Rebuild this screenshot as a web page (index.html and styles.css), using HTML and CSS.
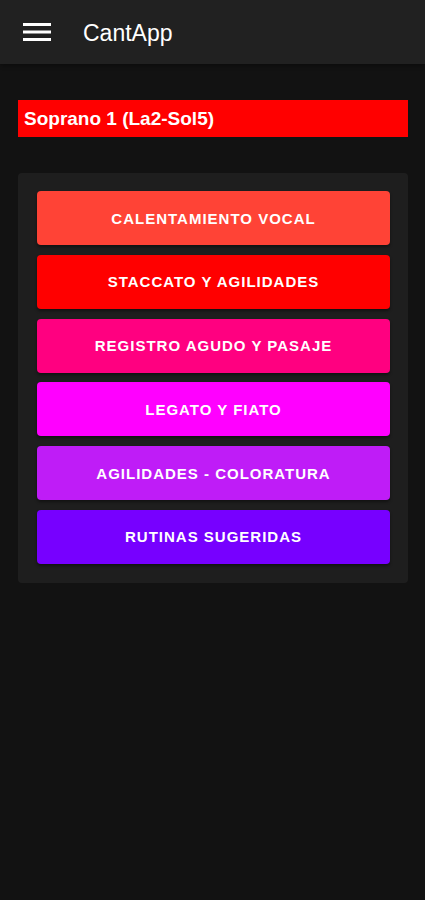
FILE: index.html
```html
<!DOCTYPE html>
<html lang="es">
<head>
<meta charset="utf-8">
<title>CantApp</title>
<link rel="stylesheet" href="styles.css">
</head>
<body>
<header class="appbar">
  <button class="menu" aria-label="menu">
    <svg width="28" height="20" viewBox="0 0 28 20"><rect x="0" y="1" width="28" height="3" fill="#fff"/><rect x="0" y="8.5" width="28" height="3" fill="#fff"/><rect x="0" y="16" width="28" height="3" fill="#fff"/></svg>
  </button>
  <h1 class="title">CantApp</h1>
</header>
<main class="content">
  <div class="voice">Soprano 1 (La2-Sol5)</div>
  <section class="card">
    <button class="btn b1">CALENTAMIENTO VOCAL</button>
    <button class="btn b2">STACCATO Y AGILIDADES</button>
    <button class="btn b3">REGISTRO AGUDO Y PASAJE</button>
    <button class="btn b4">LEGATO Y FIATO</button>
    <button class="btn b5">AGILIDADES - COLORATURA</button>
    <button class="btn b6">RUTINAS SUGERIDAS</button>
  </section>
</main>
</body>
</html>
```
FILE: styles.css
```css
html, body {
  margin: 0;
  padding: 0;
  background: #121212;
  font-family: "Liberation Sans", Arial, sans-serif;
  color: #fff;
}
.appbar {
  height: 64px;
  background: #212121;
  display: flex;
  align-items: center;
  box-shadow: 0 2px 4px rgba(0,0,0,0.3);
}
.menu {
  background: none;
  border: none;
  padding: 0;
  margin: 0 0 0 23px;
  width: 28px;
  height: 20px;
  display: flex;
}
.title {
  margin: 0 0 0 32px;
  font-size: 23px;
  font-weight: normal;
  letter-spacing: 0;
  padding-top: 2px;
}
.content {
  padding: 36px 17px 0 18px;
  display: flex;
  flex-direction: column;
  gap: 36px;
}
.voice {
  background: #ff0000;
  height: 37px;
  display: flex;
  align-items: center;
  padding-left: 6px;
  font-weight: bold;
  font-size: 19px;
}
.card {
  background: #1e1e1e;
  border-radius: 4px;
  padding: 18px 18px 19px 19px;
  display: flex;
  flex-direction: column;
  gap: 9.8px;
}
.btn {
  height: 54px;
  border: none;
  border-radius: 4px;
  color: #fff;
  font-family: "Liberation Sans", Arial, sans-serif;
  font-weight: bold;
  font-size: 15px;
  letter-spacing: 1px;
  box-shadow: 0 2px 3px rgba(0,0,0,0.4);
}
.b1 { background: #ff4336; }
.b2 { background: #ff0000; }
.b3 { background: #ff0080; }
.b4 { background: #ff00ff; }
.b5 { background: #bf1cf7; }
.b6 { background: #7700ff; }
```
